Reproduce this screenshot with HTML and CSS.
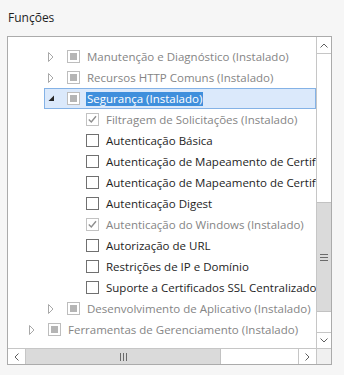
FILE: index.html
```html
<!DOCTYPE html>
<html lang="pt-BR">
<head>
    <meta charset="UTF-8">
    <meta name="viewport" content="width=device-width, initial-scale=1.0">
    <title>Funções</title>
    <link rel="stylesheet" href="styles.css">
</head>
<body>
    <div class="page">
        <div class="title">Funções</div>

        <div class="listbox">
            <div class="viewport">
                <ul class="tree">
                    <li class="row l2 dis">
                        <span class="exp"><svg width="6" height="10" viewBox="0 0 6 10"><path d="M0.5 0.5 L5 5 L0.5 9.5 Z" fill="none" stroke="#a8a8a8"/></svg></span>
                        <span class="cb indet"></span>
                        <span class="txt">Manutenção e Diagnóstico (Instalado)</span>
                    </li>
                    <li class="row l2 dis">
                        <span class="exp"><svg width="6" height="10" viewBox="0 0 6 10"><path d="M0.5 0.5 L5 5 L0.5 9.5 Z" fill="none" stroke="#a8a8a8"/></svg></span>
                        <span class="cb indet"></span>
                        <span class="txt">Recursos HTTP Comuns (Instalado)</span>
                    </li>
                    <li class="row l2 selected">
                        <span class="exp"><svg width="7" height="7" viewBox="0 0 7 7"><path d="M6 0.5 L6 6 L0.5 6 Z" fill="#262626"/></svg></span>
                        <span class="cb indet"></span>
                        <span class="txt"><span class="sel">Segurança (Instalado)</span></span>
                    </li>
                    <li class="row l3 dis">
                        <span class="exp"></span>
                        <span class="cb checked"><svg width="11" height="11" viewBox="0 0 11 11"><path d="M1.8 5.6 L4.3 8 L9 2.2" fill="none" stroke="#8e8e8e" stroke-width="1.4"/></svg></span>
                        <span class="txt">Filtragem de Solicitações (Instalado)</span>
                    </li>
                    <li class="row l3">
                        <span class="exp"></span>
                        <span class="cb"></span>
                        <span class="txt">Autenticação Básica</span>
                    </li>
                    <li class="row l3">
                        <span class="exp"></span>
                        <span class="cb"></span>
                        <span class="txt">Autenticação de Mapeamento de Certificado de Cliente</span>
                    </li>
                    <li class="row l3">
                        <span class="exp"></span>
                        <span class="cb"></span>
                        <span class="txt">Autenticação de Mapeamento de Certificado Cliente IIS</span>
                    </li>
                    <li class="row l3">
                        <span class="exp"></span>
                        <span class="cb"></span>
                        <span class="txt">Autenticação Digest</span>
                    </li>
                    <li class="row l3 dis">
                        <span class="exp"></span>
                        <span class="cb checked"><svg width="11" height="11" viewBox="0 0 11 11"><path d="M1.8 5.6 L4.3 8 L9 2.2" fill="none" stroke="#8e8e8e" stroke-width="1.4"/></svg></span>
                        <span class="txt">Autenticação do Windows (Instalado)</span>
                    </li>
                    <li class="row l3">
                        <span class="exp"></span>
                        <span class="cb"></span>
                        <span class="txt">Autorização de URL</span>
                    </li>
                    <li class="row l3">
                        <span class="exp"></span>
                        <span class="cb"></span>
                        <span class="txt">Restrições de IP e Domínio</span>
                    </li>
                    <li class="row l3">
                        <span class="exp"></span>
                        <span class="cb"></span>
                        <span class="txt">Suporte a Certificados SSL Centralizados</span>
                    </li>
                    <li class="row l2 dis">
                        <span class="exp"><svg width="6" height="10" viewBox="0 0 6 10"><path d="M0.5 0.5 L5 5 L0.5 9.5 Z" fill="none" stroke="#a8a8a8"/></svg></span>
                        <span class="cb indet"></span>
                        <span class="txt">Desenvolvimento de Aplicativo (Instalado)</span>
                    </li>
                    <li class="row l1 dis">
                        <span class="exp"><svg width="6" height="10" viewBox="0 0 6 10"><path d="M0.5 0.5 L5 5 L0.5 9.5 Z" fill="none" stroke="#a8a8a8"/></svg></span>
                        <span class="cb indet"></span>
                        <span class="txt">Ferramentas de Gerenciamento (Instalado)</span>
                    </li>
                </ul>
            </div>

            <!-- barra de rolagem vertical -->
            <div class="vscroll">
                <div class="sb-btn up"><svg width="8" height="5" viewBox="0 0 8 5"><path d="M0.5 4.5 L4 1 L7.5 4.5" fill="none" stroke="#5f5f5f"/></svg></div>
                <div class="vtrack">
                    <div class="vthumb"><svg width="8" height="7" viewBox="0 0 8 7"><path d="M0 0.5h8M0 3.5h8M0 6.5h8" stroke="#6a6a6a"/></svg></div>
                </div>
                <div class="sb-btn down"><svg width="8" height="5" viewBox="0 0 8 5"><path d="M0.5 0.5 L4 4 L7.5 0.5" fill="none" stroke="#5f5f5f"/></svg></div>
            </div>

            <!-- barra de rolagem horizontal -->
            <div class="hscroll">
                <div class="sb-btn left"><svg width="5" height="8" viewBox="0 0 5 8"><path d="M4.5 0.5 L1 4 L4.5 7.5" fill="none" stroke="#5f5f5f"/></svg></div>
                <div class="hthumb"><svg width="7" height="8" viewBox="0 0 7 8"><path d="M0.5 0v8M3.5 0v8M6.5 0v8" stroke="#6a6a6a"/></svg></div>
                <div class="htrack"></div>
                <div class="sb-btn right"><svg width="5" height="8" viewBox="0 0 5 8"><path d="M0.5 0.5 L4 4 L0.5 7.5" fill="none" stroke="#5f5f5f"/></svg></div>
            </div>

            <div class="corner"></div>
        </div>
    </div>
</body>
</html>
```

FILE: styles.css
```css
* {
    margin: 0;
    padding: 0;
    box-sizing: border-box;
}

body {
    font-family: "Open Sans", "Noto Sans", sans-serif;
    font-size: 11.5px;
    color: #1e1e1e;
    background: #f6f6f6;
}

.page {
    padding: 10px 12px 0 7px;
}

.title {
    font-size: 12px;
    line-height: 16px;
    margin: 0 0 10px 1px;
    color: #1e1e1e;
}

.listbox {
    display: grid;
    grid-template-columns: 308px 15px;
    grid-template-rows: 311px 16px;
    width: 325px;
    border: 1px solid #ababab;
    background: #fff;
}

/* Arvore */
.viewport {
    overflow: hidden;
}

.tree {
    list-style: none;
    padding-top: 9px;
}

.row {
    display: flex;
    align-items: center;
    height: 21px;
    border: 1px solid transparent;
    white-space: nowrap;
    line-height: 19px;
}

.l1 { margin-left: 17px; }
.l2 { margin-left: 36px; }
.l3 { margin-left: 55px; }

.row.dis { color: #858585; }

.row.selected {
    background: #dbe9fb;
    border-color: #84b2e6;
}

.exp {
    flex: none;
    width: 22px;
    height: 19px;
    display: flex;
    align-items: center;
    padding-left: 3px;
}

.exp svg { display: block; }

.cb {
    flex: none;
    width: 13px;
    height: 13px;
    border: 1px solid #707070;
    background: #fff;
    margin-right: 7px;
}

.cb.indet {
    border-color: #bdbdbd;
    background: #b5b5b5;
    box-shadow: inset 0 0 0 2px #fff;
}

.cb.checked {
    border-color: #c2c2c2;
}

.cb svg { display: block; }

.txt { flex: none; }

.sel {
    display: inline-block;
    line-height: 14px;
    background: #3f8fdc;
    color: #fff;
    padding: 0 1px;
    margin-left: -1px;
}

/* Barras de rolagem */
.vscroll {
    display: flex;
    flex-direction: column;
    border-left: 1px solid #c6c6c6;
}

.sb-btn {
    display: flex;
    align-items: center;
    justify-content: center;
    background: #fff;
    flex: none;
}

.sb-btn svg { display: block; }

.sb-btn.up {
    height: 17px;
    border-bottom: 1px solid #c6c6c6;
}

.sb-btn.down {
    height: 16px;
    border-top: 1px solid #c6c6c6;
}

.vtrack {
    flex: 1;
    padding-top: 148px;
}

.vthumb {
    height: 110px;
    background: #dadada;
    border-top: 1px solid #c2c2c2;
    border-bottom: 1px solid #c2c2c2;
    display: flex;
    align-items: center;
    justify-content: center;
}

.hscroll {
    display: flex;
    border-top: 1px solid #c6c6c6;
}

.sb-btn.left {
    width: 18px;
    border-right: 1px solid #c6c6c6;
}

.sb-btn.right {
    width: 18px;
    border-left: 1px solid #c6c6c6;
}

.hthumb {
    width: 195px;
    background: #dadada;
    border-right: 1px solid #c2c2c2;
    display: flex;
    align-items: center;
    justify-content: center;
}

.htrack {
    flex: 1;
}

.corner {
    background: #f0f0f0;
    border-top: 1px solid #c6c6c6;
    border-left: 1px solid #c6c6c6;
}
```
